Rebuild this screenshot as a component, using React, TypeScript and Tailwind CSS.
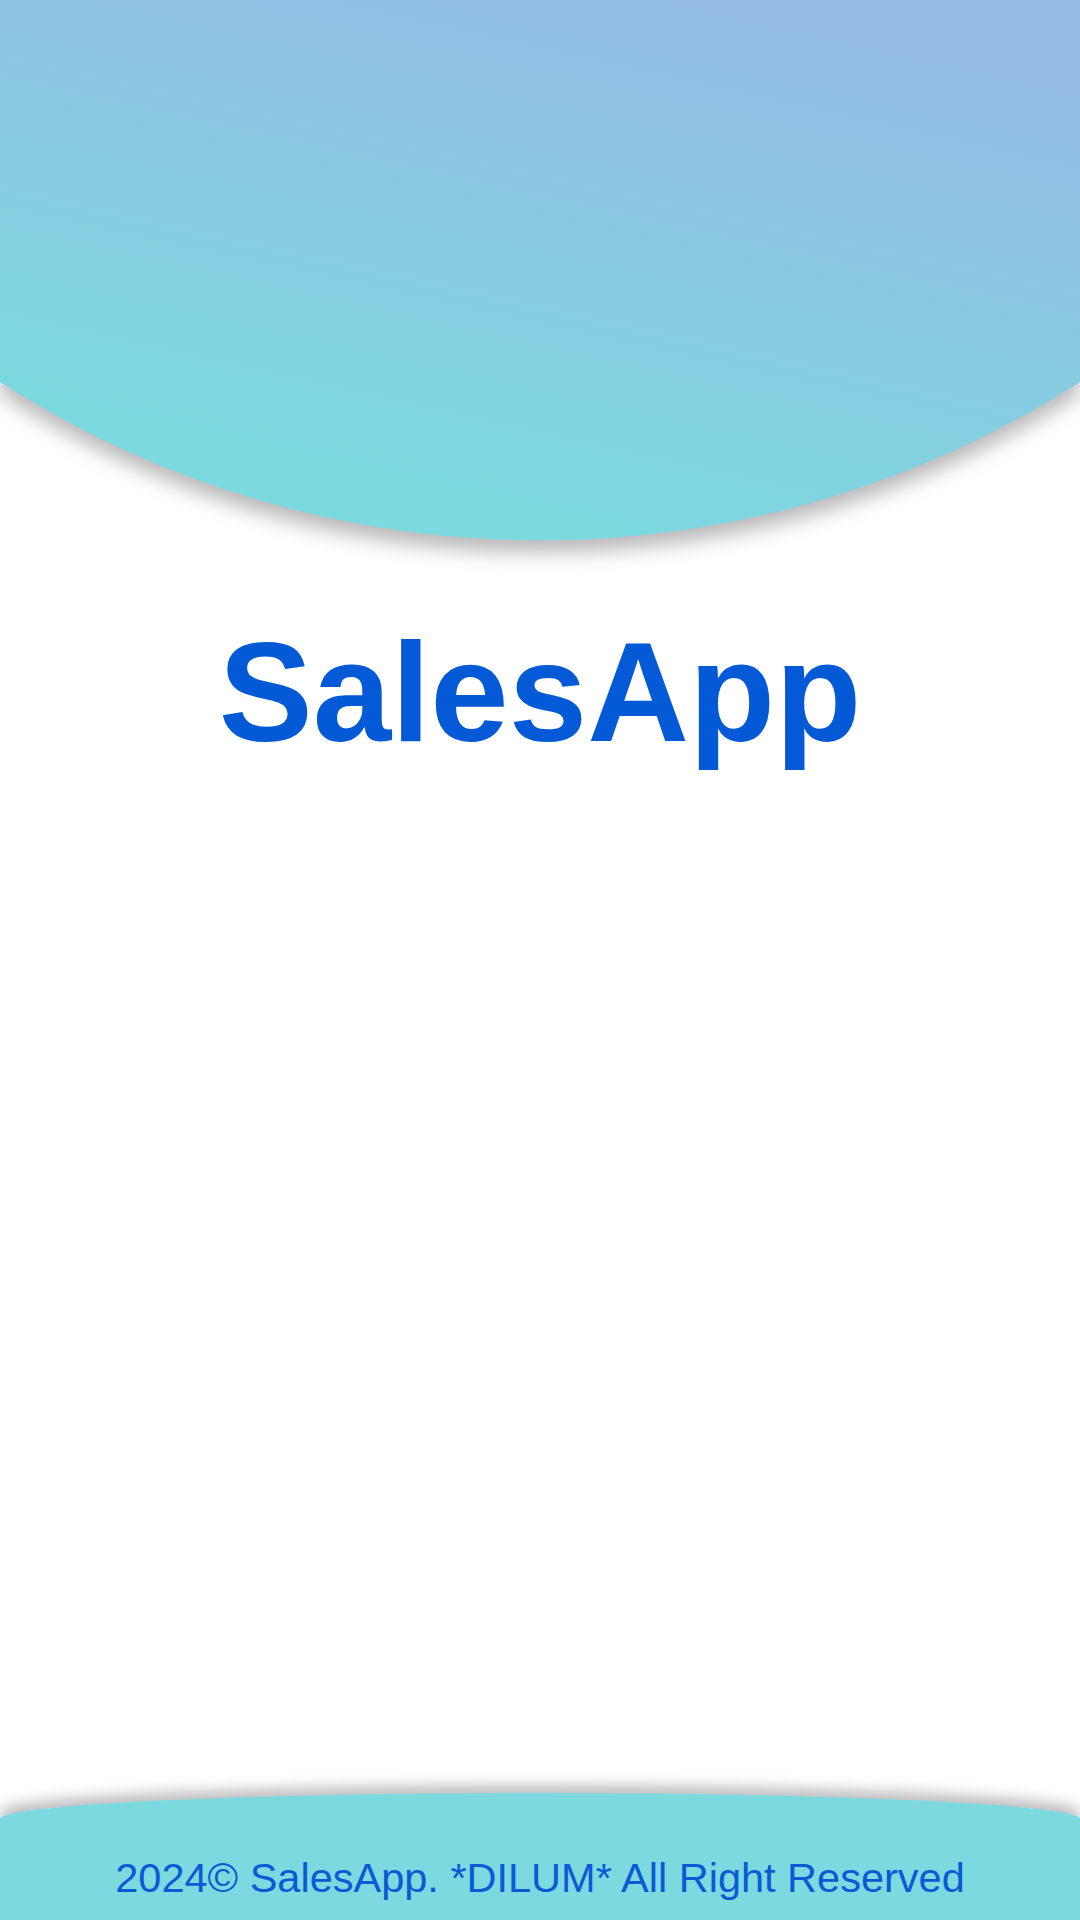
export default function App() {
  return (
    <div
      className="h-[1920px] w-[1080px] flex flex-col bg-white overflow-hidden"
      style={{ fontFamily: '"Liberation Sans", Arial, sans-serif' }}
    >
      {/* Curved header */}
      <div className="h-[540px] shrink-0">
        <svg
          viewBox="0 0 1080 540"
          className="w-full h-full overflow-visible drop-shadow-[0_12px_10px_rgba(0,0,0,0.28)]"
        >
          <defs>
            <linearGradient id="hdr" gradientUnits="userSpaceOnUse" x1="680" y1="0" x2="560" y2="540">
              <stop offset="0" stopColor="#95bde5" />
              <stop offset="0.45" stopColor="#8ac9e2" />
              <stop offset="1" stopColor="#7adadf" />
            </linearGradient>
          </defs>
          <path d="M0 0H1080V382A1000 1000 0 0 1 0 382Z" fill="url(#hdr)" />
        </svg>
      </div>

      {/* Title */}
      <h1 className="mt-[82px] text-center text-[141px] leading-none font-bold text-[#045ad6]">
        SalesApp
      </h1>

      <div className="flex-1" />

      {/* Footer */}
      <div className="h-[127px] shrink-0 bg-[#7bd9df] rounded-t-[50%_26px] shadow-[0_-8px_14px_rgba(0,0,0,0.25)] flex items-end justify-center pb-[22px]">
        <p className="text-[41.5px] leading-none text-[#0a5ad6] whitespace-nowrap">
          2024© SalesApp. *DILUM* All Right Reserved
        </p>
      </div>
    </div>
  );
}
